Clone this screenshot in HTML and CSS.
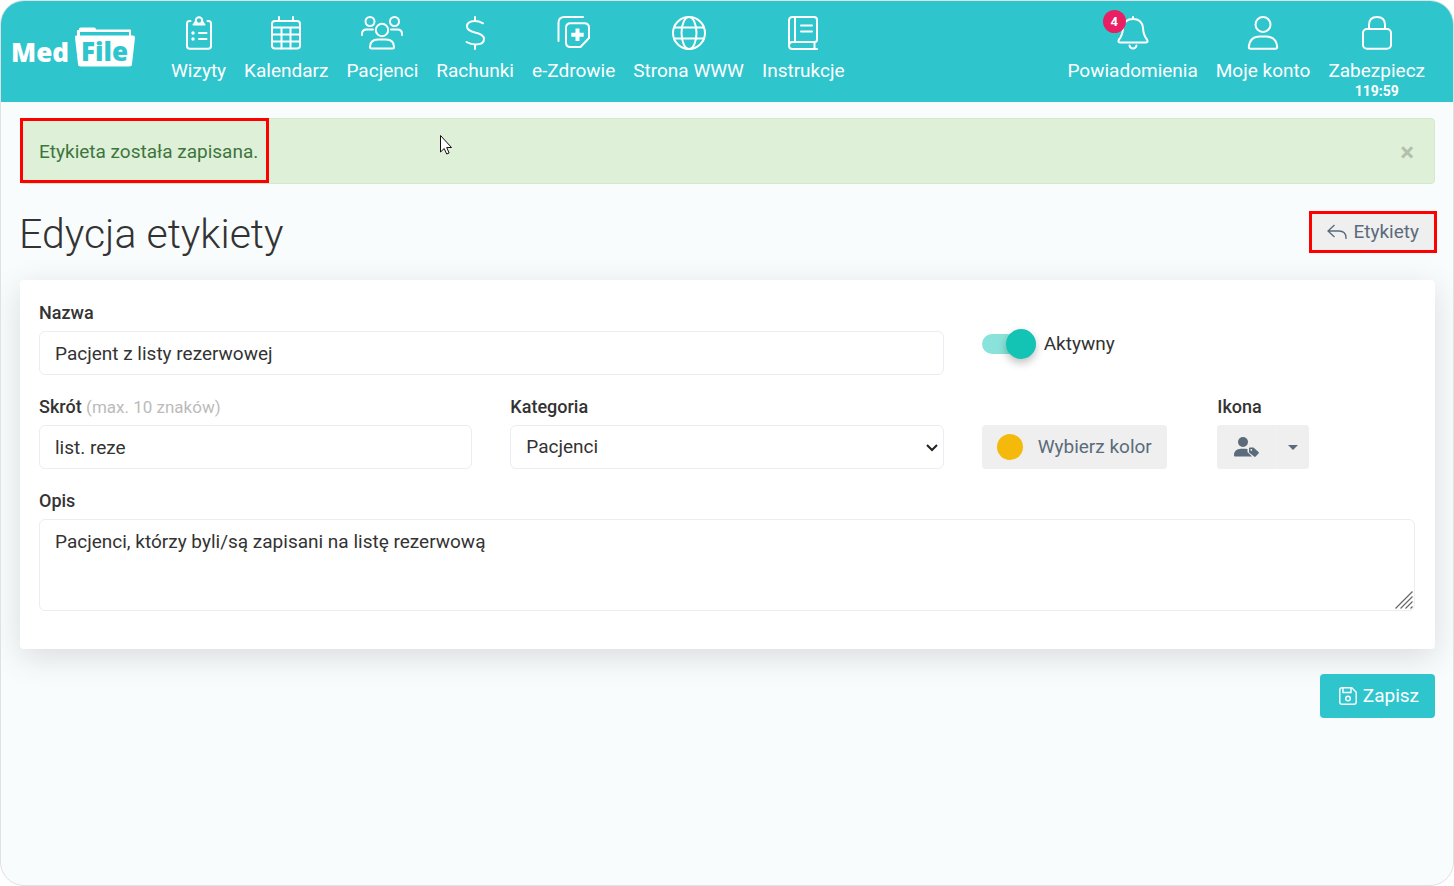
FILE: index.html
```html
<!DOCTYPE html>
<html lang="pl">
<head>
<meta charset="utf-8">
<title>MedFile – Edycja etykiety</title>
<link rel="stylesheet" href="styles.css">
</head>
<body>
<div class="frame">
  <header class="topbar">
    <a class="logo" href="#" aria-label="MedFile">
      <svg width="126" height="42" viewBox="0 0 126 42">
        <text class="logo-text" x="1" y="36">Med</text>
        <path class="solid" d="M67 10V5q0-1 1-1h1V3q0-1.500 2-1.500h13q2 0 2 2h34q1 0 1 1v6h-2V6H70v4z"/>
        <path class="solid" d="M66 9.500h57q2 0 2 2l-3 26.500q0 2.500-3 2.500H71q-3 0-3-2.500L65 11.500q0-2 1-2z"/>
        <text class="logo-text logo-cut" x="71" y="35">File</text>
      </svg>
    </a>
    <nav class="nav">
      <a class="nav-item" href="#">
        <svg width="34" height="34" viewBox="0 0 34 34"><path d="M8.500 5H7.500Q5 5 5 7.500v22.500Q5 32.800 7.800 32.800h18.400Q29 32.800 29 30V7.500Q29 5 26.500 5h-1M11.500 8.500h11M12.500 8.500q0-2.500 1.700-2.800M21.500 8.500q0-2.500-1.700-2.800M17 23h7.500M17 17h7.500"/><circle cx="17" cy="4.500" r="3.200"/><circle class="dot" cx="11" cy="17" r="1.700"/><circle class="dot" cx="11" cy="23" r="1.700"/></svg>
        <span>Wizyty</span>
      </a>
      <a class="nav-item" href="#">
        <svg width="34" height="34" viewBox="0 0 34 34"><rect x="3" y="5" width="28" height="27.500" rx="3"/><path d="M10 1v4M24 1v4M3 11.500h28M3 18.500h28M3 25.500h28M12.500 11.500v21M21.500 11.500v21"/></svg>
        <span>Kalendarz</span>
      </a>
      <a class="nav-item" href="#">
        <svg width="42" height="34" viewBox="0 0 42 34"><circle cx="9" cy="5.500" r="4.500"/><circle cx="33.500" cy="5.500" r="4.500"/><circle cx="21" cy="14" r="6.200"/><path d="M1 19v-1q0-4.500 4.500-4.500H12M41 19v-1q0-4.500-4.500-4.500H30M10.500 32.500h21q1.500 0 1.500-1.500 0-7.500-8-7.500h-8q-8 0-8 7.500 0 1.500 1.500 1.500z"/></svg>
        <span>Pacjenci</span>
      </a>
      <a class="nav-item" href="#">
        <svg width="34" height="34" viewBox="0 0 34 34"><path d="M17 1v4M17 28.500V33M25 7.300Q21 5 17 5q-8 0-8 5.500 0 4 8 6 9 2 9 6.500 0 5.500-8.500 5.500-4.500 0-9-2.500"/></svg>
        <span>Rachunki</span>
      </a>
      <a class="nav-item" href="#">
        <svg width="34" height="34" viewBox="0 0 34 34"><path d="M1.500 25V7q0-6 6-6H26M13.500 7.200h14q4.500 0 4.500 4.500V22l-8.500 9h-10Q9 31 9 26.500v-14.800q0-4.500 4.500-4.500z"/><path class="solid" d="M18.500 12.500h4v4.200h4.200v4h-4.200v4.200h-4v-4.200h-4.200v-4h4.200z"/></svg>
        <span>e-Zdrowie</span>
      </a>
      <a class="nav-item" href="#">
        <svg width="34" height="34" viewBox="0 0 34 34"><circle cx="17" cy="17" r="16"/><ellipse cx="17" cy="17" rx="7.500" ry="16"/><path d="M2 11.500h30M2 22.500h30"/></svg>
        <span>Strona WWW</span>
      </a>
      <a class="nav-item" href="#">
        <svg width="34" height="34" viewBox="0 0 34 34"><path d="M31 33H6.500Q3 33 3 29.500V4.500Q3 1 6.500 1H28q3 0 3 3v19.500q0 2.500-2.500 2.500h-22Q3 26 3 29.500M28.500 26v7M9 1v25M15 9.500h11M15 15.500h11"/></svg>
        <span>Instrukcje</span>
      </a>
    </nav>
    <nav class="nav nav-user">
      <a class="nav-item" href="#">
        <span class="bell">
          <svg width="34" height="34" viewBox="0 0 34 34"><path d="M17 1v2M17 3q-9 0-10 9-.3 7-4 11.500-1.500 3 1 3h26q2.500 0 1-3Q27.300 19 27 12 26 3 17 3zM13.500 29.500q.8 3 3.500 3t3.500-3"/></svg>
          <span class="badge">4</span>
        </span>
        <span>Powiadomienia</span>
      </a>
      <a class="nav-item" href="#">
        <svg width="34" height="34" viewBox="0 0 34 34"><circle cx="17" cy="8.500" r="7.500"/><path d="M4.500 32.800h25q1.700 0 1.700-2Q30 20.500 20 20.500h-6Q4 20.500 2.800 30.800q0 2 1.700 2z"/></svg>
        <span>Moje konto</span>
      </a>
      <a class="nav-item" href="#">
        <svg width="34" height="34" viewBox="0 0 34 34"><rect x="3" y="13" width="28" height="19.800" rx="4"/><path d="M9 13V9q0-8 8-8t8 8v4"/></svg>
        <span>Zabezpiecz</span>
        <span class="timer">119:59</span>
      </a>
    </nav>
  </header>

  <main class="content">
    <div class="alert" role="alert">
      <span class="alert-text">Etykieta została zapisana.</span>
      <button class="alert-close" type="button" aria-label="Zamknij">×</button>
      <svg class="pointer" width="12" height="20" viewBox="0 0 12 20"><path d="M.5.500v16.500l3.700-3.500 2.500 5.500 2.400-1-2.400-5.500h4.800z"/></svg>
    </div>

    <div class="title-row">
      <h1>Edycja etykiety</h1>
      <button class="btn btn-back" type="button">
        <svg width="20" height="16" viewBox="0 0 20 16"><path d="M7.500 1L1 7l6.500 6M1 7h11q7 0 7 7v1"/></svg>
        Etykiety
      </button>
    </div>

    <form>
      <div class="card">
        <div class="field span-8">
          <label for="name">Nazwa</label>
          <input class="control" id="name" type="text" value="Pacjent z listy rezerwowej">
        </div>
        <label class="switch"><input type="checkbox" role="switch" checked>Aktywny</label>

        <div class="field span-4">
          <label for="short">Skrót <span class="hint">(max. 10 znaków)</span></label>
          <input class="control" id="short" type="text" value="list. reze">
        </div>
        <div class="field span-4">
          <label for="category">Kategoria</label>
          <div class="overlay">
            <select class="control" id="category"><option>Pacjenci</option></select>
            <svg class="chevron" width="12" height="8" viewBox="0 0 12 8"><path d="M1 1l5 5 5-5"/></svg>
          </div>
        </div>
        <button class="btn btn-color" type="button"><span class="swatch"></span>Wybierz kolor</button>
        <div class="field span-2">
          <span class="label" id="icon-label">Ikona</span>
          <div class="split" role="group" aria-labelledby="icon-label">
            <button class="btn split-main" type="button" aria-label="Pacjent z etykietą">
              <svg width="25" height="20" viewBox="0 0 25 20"><circle cx="9" cy="5" r="5"/><path d="M0 18.500Q0 11.700 7 11.700h4q1.500 0 2.500.4V15l4.500 4.500H1q-1 0-1-1z"/><path d="M15 11.500q0-1 1-1h3.500l5 4.500q.8.800 0 1.600l-2.800 3q-.8.700-1.600 0L15 15.500zM17.300 12a.9.900 0 100 1.800.9.900 0 000-1.800z" fill-rule="evenodd"/></svg>
            </button>
            <button class="btn split-caret" type="button" aria-label="Wybierz ikonę">
              <svg width="10" height="5" viewBox="0 0 10 5"><path d="M0 0h10L5 5z"/></svg>
            </button>
          </div>
        </div>

        <div class="field span-12">
          <label for="desc">Opis</label>
          <div class="overlay">
            <textarea class="control area" id="desc">Pacjenci, którzy byli/są zapisani na listę rezerwową</textarea>
            <svg class="grip" width="18" height="18" viewBox="0 0 18 18"><path d="M.5 17.500l17-17M5.500 17.500l12-12M10.500 17.500l7-7M15.500 17.500l2-2"/></svg>
          </div>
        </div>
      </div>
      <div class="actions">
        <button class="btn btn-save" type="submit">
          <svg width="18" height="18" viewBox="0 0 18 18"><path d="M3 .8h9.800l4.400 4.400V15q0 2.200-2.200 2.200H3Q.8 17.200.8 15V3Q.8.800 3 .8zM4 1v4.500h8V1"/><circle cx="9" cy="11.500" r="2.300"/></svg>
          Zapisz
        </button>
      </div>
    </form>
  </main>
</div>
</body>
</html>
```
FILE: styles.css
```css
* { box-sizing: border-box; }

body {
  margin: 0;
  background: #fff;
  color: #333;
  font: 19px/24px Roboto, "Liberation Sans", sans-serif;
}

.frame {
  min-height: 100vh;
  border: 1px solid #dfe1e2;
  border-radius: 24px;
  background: #f9fcfd;
  overflow: hidden;
}

svg { display: block; flex: none; }

/* Top bar */
.topbar {
  display: flex;
  align-items: flex-start;
  height: 101px;
  padding: 15px 28px 0 9px;
  background: #2fc5cd;
}

.logo { margin: 10px 35px 0 0; }
.logo-text { font: 800 26px "Open Sans", sans-serif; fill: #fff; }
.logo-text.logo-cut { fill: #2fc5cd; }

.nav { display: flex; gap: 18px; }
.nav-user { margin-left: auto; }

.nav-item {
  display: flex;
  flex-direction: column;
  align-items: center;
  color: #fff;
  text-decoration: none;
  white-space: nowrap;
}
.nav-item svg {
  margin-bottom: 9px;
  fill: none;
  stroke: #fff;
  stroke-width: 2;
  stroke-linecap: round;
  stroke-linejoin: round;
}
.solid, .nav-item .solid, .nav-item .dot { fill: #fff; stroke: none; }
.timer { font-size: 14px; font-weight: 700; line-height: 16px; }

.bell { position: relative; }
.badge {
  position: absolute;
  top: -6px;
  left: -13px;
  width: 23px;
  border-radius: 50%;
  background: #e91e63;
  font-size: 13px;
  font-weight: 700;
  line-height: 23px;
  text-align: center;
}

/* Content */
.content { padding: 16px 18px 24px 19px; }

.alert {
  position: relative;
  display: flex;
  justify-content: space-between;
  align-items: center;
  height: 66px;
  padding-right: 20px;
  border: 1px solid #d6e9c6;
  border-radius: 4px;
  background: #dff0d8;
  color: #3c763d;
}
.alert-text {
  margin: -1px;
  padding: 19px 8px 16px 16px;
  border: 3px solid #f00;
  line-height: 24px;
  align-self: flex-start;
}
.alert-close {
  padding: 2px 0 0;
  border: 0;
  background: none;
  color: #b2c0ad;
  font: 700 26px/26px Roboto, sans-serif;
}
.pointer { position: absolute; left: 419px; top: 16px; fill: #fff; stroke: #111; }

.title-row {
  display: flex;
  justify-content: space-between;
  align-items: center;
  margin: 22px -2px;
}
h1 { margin: 0; padding-top: 4px; font-size: 41px; font-weight: 300; line-height: 48px; padding-left: 1px; }

.btn {
  display: flex;
  align-items: center;
  height: 44px;
  border: 0;
  border-radius: 4px;
  background: #efefef;
  color: #5b6b7b;
  font: inherit;
}
.btn-back {
  gap: 6px;
  height: 42px;
  padding: 0 15px;
  border: 3px solid #f00;
  border-radius: 0;
}
.btn-back svg { fill: none; stroke: #5b6b7b; stroke-width: 1.3; }

.card {
  display: grid;
  grid-template-columns: repeat(12, minmax(0, 1fr));
  gap: 20px 38px;
  padding: 21px 20px 38px 19px;
  border-radius: 4px;
  background: #fff;
  box-shadow: 0 8px 32px rgba(0, 0, 0, .13);
}
.span-2 { grid-column: span 2; }
.span-4 { grid-column: span 4; }
.span-8 { grid-column: span 8; }
.span-12 { grid-column: span 12; }

.field { display: flex; flex-direction: column; gap: 6px; }
.field label, .label { font-size: 18px; font-weight: 500; }
.field .hint { color: #bbb; font-size: 17px; font-weight: 400; }

.control {
  display: block;
  width: 100%;
  height: 44px;
  padding: 0 15px;
  border: 1px solid #ebedf2;
  border-radius: 6px;
  background: #fff;
  color: #333;
  font: inherit;
  appearance: none;
}
.area { height: 92px; padding-top: 10px; resize: none; }
.overlay { position: relative; }
.chevron { position: absolute; right: 6px; top: 19px; fill: none; stroke: #222; stroke-width: 2; pointer-events: none; }
.grip { position: absolute; right: 2px; bottom: 2px; stroke: #666; stroke-width: 1.2; }

.switch {
  display: flex;
  align-items: center;
  align-self: end;
  gap: 8px;
  grid-column: span 4;
  padding-bottom: 16px;
}
.switch input {
  display: flex;
  justify-content: flex-end;
  align-items: center;
  width: 54px;
  height: 20px;
  margin: 5px 0;
  border-radius: 10px;
  background: #8ae3da;
  appearance: none;
}
.switch input::before {
  content: "";
  width: 30px;
  height: 30px;
  border-radius: 50%;
  background: #13c4b5;
  box-shadow: 0 4px 8px rgba(0, 0, 0, .25);
}

.btn-color { grid-column: span 2; align-self: end; justify-self: start; gap: 15px; padding: 0 15px; white-space: nowrap; }
.swatch { width: 26px; height: 26px; border-radius: 50%; background: #f5b90c; }

.split { display: flex; gap: 1px; background: #f2f2f2; width: 92px; border-radius: 4px; }
.split svg { fill: #5b6b7b; }
.split-main { flex: 1; justify-content: center; padding: 0; border-radius: 4px 0 0 4px; }
.split-caret { width: 32px; justify-content: center; padding: 0; border-radius: 0 4px 4px 0; }

.actions { display: flex; justify-content: flex-end; margin-top: 25px; }
.btn-save { gap: 6px; padding: 0 16px 0 19px; background: #2fc5cd; color: #fff; }
.btn-save svg { fill: none; stroke: #fff; stroke-width: 1.4; }
```
